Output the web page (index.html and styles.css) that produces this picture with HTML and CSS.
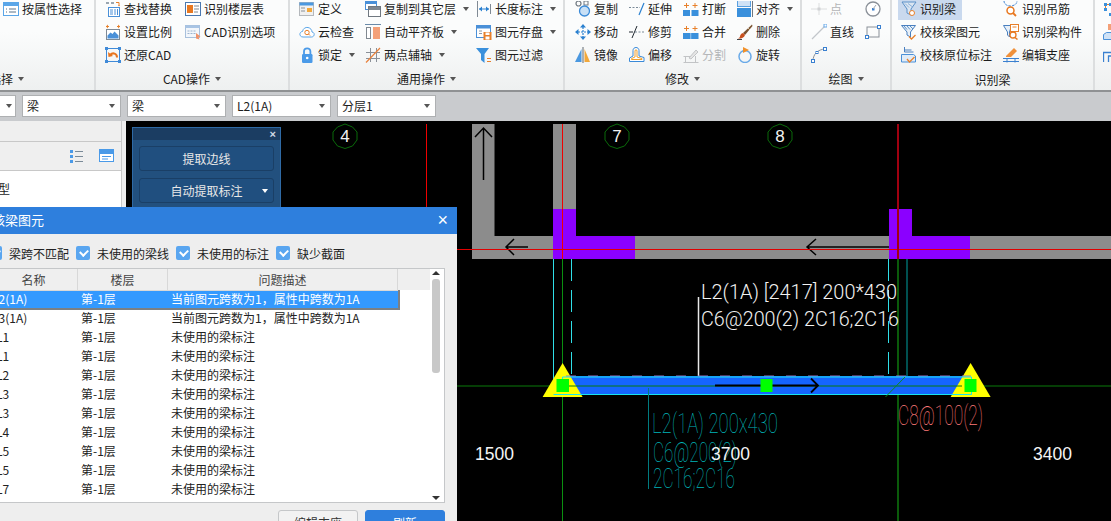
FILE: index.html
```html
<!DOCTYPE html>
<html lang="zh-CN">
<head>
<meta charset="utf-8">
<title>校核梁图元</title>
<link rel="stylesheet" href="styles.css">
</head>
<body>
<div class="page">
  <header class="ribbon">
    <section class="group g1">
      <div class="rows">
        <div class="item"><svg class="ic" viewBox="0 0 16 16"><rect x=".5" y="1.500" width="15" height="13" fill="#fff" stroke="#5aa6e8"/><rect x=".5" y="1.500" width="15" height="3.500" fill="#5aa6e8"/><path d="M3 8h1M6 8h7M3 11h1M6 11h7" stroke="#5a7288"/></svg><span>按属性选择</span></div>
      </div>
      <div class="label first"><span>选择</span><i class="caret"></i></div>
    </section>
    <section class="group g2">
      <div class="rows">
        <div class="item"><svg class="ic" viewBox="0 0 16 16"><path d="M1 1h3v2H1zM6 1h3v2H6z" fill="#9aa6b0"/><path d="M11 1.500h3v3" fill="none" stroke="#e8802a"/><path d="M13 4l1 1.500 1-1.500z" fill="#e8802a"/><rect x="3.500" y="6.500" width="11" height="9" fill="#fff" stroke="#4a90d8"/><path d="M5 9h3M5 11h3M5 13h3M10 8v6M12.500 8v6" stroke="#4a90d8"/></svg><span>查找替换</span></div>
        <div class="item"><svg class="ic" viewBox="0 0 16 16"><rect x=".5" y="1.500" width="15" height="13" fill="#fff" stroke="#4a78b0"/><rect x="2" y="4" width="6" height="8" fill="#e87820"/><path d="M9 5h5M9 8h5M9 11h4" stroke="#808890"/></svg><span>识别楼层表</span></div>
        <div class="item"><svg class="ic" viewBox="0 0 16 16"><path d="M1 2.500h3M12 2.500h3" stroke="#e8802a"/><path d="M3 .5v4L1 2.500zM13 .5v4l2-2z" fill="#e8802a"/><rect x="1.500" y="5.500" width="13" height="10" fill="#fff" stroke="#7e8a96"/><path d="M2.500 14.500v-3l3-3 2 1.500 2-2.500 4 4v3z" fill="#4a90d8"/></svg><span>设置比例</span></div>
        <div class="item"><svg class="ic" viewBox="0 0 16 16"><rect x=".5" y="1.500" width="14" height="12" fill="#f2f6fb" stroke="#a8c0dc"/><rect x=".5" y="1.500" width="14" height="2.500" fill="#a8c4e4"/><path d="M2.500 7h9M2.500 9.500h9" stroke="#9db4cf" stroke-dasharray="2 1"/><path d="M11 9l4.500 3.500-2 .5 1 2.500-3.500-1z" fill="#f0926a"/></svg><span>CAD识别选项</span></div>
        <div class="item"><svg class="ic" viewBox="0 0 16 16"><rect x="1.500" y="1.500" width="13" height="13" fill="none" stroke="#3f8ad8"/><path d="M0 0h3v3H0zM13 0h3v3h-3zM0 13h3v3H0zM13 13h3v3h-3z" fill="#3f8ad8"/><path d="M12 10.500C12 6.500 8 5 5 8" fill="none" stroke="#e8741e" stroke-width="2"/><path d="M3 5l.5 5 4.500-1z" fill="#e8741e"/></svg><span>还原CAD</span></div>
      </div>
      <div class="label"><span>CAD操作</span><i class="caret"></i></div>
    </section>
    <section class="group g3">
      <div class="rows">
        <div class="item"><svg class="ic" viewBox="0 0 16 16"><rect x=".5" y="1.500" width="14" height="13" fill="#f0f0f0" stroke="#b4b8bc"/><rect x=".5" y="1.500" width="14" height="3" fill="#4a98e0"/><path d="M2 7h4M2 10h4" stroke="#8a9096"/><rect x="8" y="7" width="5" height="4" fill="#f2a83a"/></svg><span>定义</span></div>
        <div class="item"><svg class="ic" viewBox="0 0 16 16"><rect x=".5" y="-2.500" width="11" height="11" fill="#fff" stroke="#4a90d8"/><rect x="1" y="-2" width="10" height="5" fill="#4a90d8"/><rect x="3.500" y="5.500" width="12" height="10" fill="#fff" stroke="#707880"/><rect x="4" y="6" width="11" height="3" fill="#808890"/></svg><span>复制到其它层</span><i class="caret"></i></div>
        <div class="item"><svg class="ic" viewBox="0 0 16 16"><path d="M1.500 0v16M14.500 3v10" stroke="#808a94"/><path d="M3 8h10" stroke="#2a80d0"/><path d="M6 5.500v5L3 8zM10 5.500v5l3-2.500z" fill="#2a80d0"/></svg><span>长度标注</span><i class="caret"></i></div>
        <div class="item"><svg class="ic" viewBox="0 0 16 16"><path d="M4 13C1.500 13 .5 11 1 9.500c.5-1.500 1.500-2 2.500-2C4 4.500 6.500 3 9 3.500s4 2.500 4 4.500c2 .3 2.500 2 2 3.300-.4 1.200-1.500 1.700-2.500 1.700z" fill="#fff" stroke="#5aa6e8"/><circle cx="8" cy="8.500" r="2.200" fill="none" stroke="#e8802a"/><path d="M9.500 10l1.500 1.500" stroke="#e8802a"/></svg><span>云检查</span></div>
        <div class="item"><svg class="ic" viewBox="0 0 16 16"><path d="M0 .5h16" stroke="#6a8aa8"/><rect x="1.500" y="3.500" width="4" height="11" fill="#fff" stroke="#808890"/><rect x="8" y="3" width="7" height="12" fill="#f4a078"/></svg><span>自动平齐板</span><i class="caret"></i></div>
        <div class="item"><svg class="ic" viewBox="0 0 16 16"><rect x=".5" y="1.500" width="14" height="12" fill="#fff" stroke="#4a90d8"/><rect x="1" y="2" width="13" height="2.500" fill="#4a90d8"/><path d="M3 7h3M3 9.500h3" stroke="#8a98a6"/><rect x="7.500" y="8" width="8" height="8" fill="#e8802a"/><rect x="9.500" y="8.500" width="4" height="2.500" fill="#fff"/><rect x="9.500" y="12.500" width="4" height="3" fill="#fff"/></svg><span>图元存盘</span><i class="caret"></i></div>
        <div class="item lock"><svg class="ic" viewBox="0 0 16 16"><path d="M5 8V4.500a3.200 3.200 0 0 1 6.400 0V8" fill="none" stroke="#4a9ae8" stroke-width="1.800"/><rect x="3" y="7" width="10.500" height="9" rx="1.200" fill="#4a9ae8"/><circle cx="8.200" cy="11" r="1.300" fill="#fff"/></svg><span>锁定</span><i class="caret"></i></div>
        <div class="item"><svg class="ic" viewBox="0 0 16 16"><path d="M5.500 1v14M11.500 1v14M1 5.500h14M1 11.500h14" stroke="#8a9098"/><path d="M1 15.500L15 1" stroke="#e8803a" stroke-width="1.200"/></svg><span>两点辅轴</span><i class="caret"></i></div>
        <div class="item"><svg class="ic" viewBox="0 0 16 16"><path d="M0 1h13L8.500 7v9L5 13V7z" fill="#3a90dc"/><path d="M11 11.500h4M11 14.500h4" stroke="#e8802a"/></svg><span>图元过滤</span></div>
      </div>
      <div class="label"><span>通用操作</span><i class="caret"></i></div>
    </section>
    <section class="group g4">
      <div class="rows">
        <div class="item"><svg class="ic" viewBox="0 0 16 16"><circle cx="3.500" cy="2.500" r="2.500" fill="none" stroke="#707880" stroke-width="1.200"/><rect x="9" y="0" width="4" height="4" fill="none" stroke="#707880"/><circle cx="9.500" cy="10" r="5" fill="#c8e0f6" stroke="#3a8ad8" stroke-width="1.300"/></svg><span>复制</span></div>
        <div class="item"><svg class="ic" viewBox="0 0 16 16"><path d="M0 6.500h11" stroke="#7a8a98" stroke-dasharray="2 1.500"/><path d="M10 14L15 2" stroke="#2a80d0" stroke-width="1.200"/></svg><span>延伸</span></div>
        <div class="item"><svg class="ic" viewBox="0 0 16 16"><rect x="0" y="9" width="7" height="6" fill="#3a90dc"/><rect x="8.500" y="9" width="7" height="6" fill="#3a90dc"/><path d="M3.500 2v5M1 4.500h5M12 2v5M9.500 4.500h5" stroke="#e8802a"/></svg><span>打断</span></div>
        <div class="item"><svg class="ic" viewBox="0 0 16 16"><rect x=".5" y="-3.500" width="13" height="9" fill="#cfe2f6" stroke="#5aa0e0"/><rect x="0" y="7" width="14" height="9" fill="#3a90dc"/><path d="M15.500 0v16" stroke="#707880"/></svg><span>对齐</span><i class="caret"></i></div>
        <div class="item"><svg class="ic" viewBox="0 0 16 16"><path d="M8 3v10M3 8h10" stroke="#2a80d0" stroke-width="1.200" stroke-dasharray="2 1"/><path d="M8 0l3 3.500H5zM8 16l3-3.500H5zM0 8l3.500-3v6zM16 8l-3.500-3v6z" fill="#2a80d0"/></svg><span>移动</span></div>
        <div class="item"><svg class="ic" viewBox="0 0 16 16"><path d="M6 8h10" stroke="#7a8a98" stroke-dasharray="2 1.500"/><path d="M0 8h4" stroke="#202830"/><path d="M3 14L8 2" stroke="#202830"/></svg><span>修剪</span></div>
        <div class="item"><svg class="ic" viewBox="0 0 16 16"><rect x="0" y="9" width="15.500" height="6" fill="#3a90dc"/><path d="M7.750 9v6" stroke="#9cc8f0"/><path d="M3.500 2v5M1 4.500h5M12 2v5M9.500 4.500h5" stroke="#e8802a"/></svg><span>合并</span></div>
        <div class="item"><svg class="ic" viewBox="0 0 16 16"><path d="M15 .5L6 9l2 2 7.500-9z" fill="#7a5230"/><path d="M11 4l2 2" stroke="#d8c8a8"/><path d="M6 9c-2 .5-3 2-3 3.500-.3 1-1 1.500-2 2 2.500.5 6-.5 7-3.500z" fill="#c8501e"/><path d="M0 15.500h5" stroke="#404448"/></svg><span>删除</span></div>
        <div class="item"><svg class="ic" viewBox="0 0 16 16"><path d="M6.500 2v13H0z" fill="#4a98e0"/><path d="M9.500 2v13H15z" fill="#f2a83a"/><path d="M8 0v16" stroke="#606870"/></svg><span>镜像</span></div>
        <div class="item"><svg class="ic" viewBox="0 0 16 16"><path d="M.5 14.500v-3.500l3.500-2V3.500c0-2 1.500-3 3-3s3 1 3 3V9l5 1.500v4z" fill="#fff" stroke="#3a8ad8"/><path d="M2.500 12.500v-1L6 10V4c0-.8.5-1.300 1-1.300s1 .5 1 1.300v6l5 1.500v1z" fill="none" stroke="#f0a030"/></svg><span>偏移</span></div>
        <div class="item off"><svg class="ic" viewBox="0 0 16 16"><path d="M.5 15.500h15M2.500 9v6.500M12.500 9v6.500M.5 9.500h10" stroke="#c2c4c6"/><path d="M6 11l7-8 2 2-7 7z" fill="#e4e4e4" stroke="#c2c4c6"/></svg><span>分割</span></div>
        <div class="item"><svg class="ic" viewBox="0 0 16 16"><circle cx="8" cy="9.500" r="6" fill="none" stroke="#6aaae8" stroke-width="1.500"/><path d="M6 0l6 3-6 3z" fill="#f0902a"/></svg><span>旋转</span></div>
      </div>
      <div class="label"><span>修改</span><i class="caret"></i></div>
    </section>
    <section class="group g5">
      <div class="rows">
        <div class="item off"><svg class="ic" viewBox="0 0 16 16"><path d="M0 8h16M8 2v12" stroke="#dcdedf"/><rect x="6.500" y="6.500" width="3" height="3" fill="#d0d2d4"/></svg><span>点</span></div>
        <div class="item"><svg class="ic" viewBox="0 0 16 16"><circle cx="8" cy="8" r="7" fill="#fff" stroke="#8a9098" stroke-width="1.300"/><rect x="7" y="7" width="2.500" height="2.500" fill="#3a80d0"/><path d="M8 8l3-4" stroke="#a0a8b0"/></svg></div>
        <div class="item"><svg class="ic" viewBox="0 0 16 16"><path d="M1 15L15 1" stroke="#c2c6ca" stroke-width="1.200"/><rect x="13" y="0" width="3" height="3" fill="#fff" stroke="#6aaae8"/></svg><span>直线</span></div>
        <div class="item"><svg class="ic" viewBox="0 0 16 16"><rect x="2" y="3" width="12" height="10" fill="none" stroke="#8a9098"/><rect x="12.500" y="1.500" width="3" height="3" fill="#fff" stroke="#3a80d0"/><rect x=".5" y="11.500" width="3" height="3" fill="#fff" stroke="#3a80d0"/></svg></div>
        <div class="item"><svg class="ic" viewBox="0 0 16 16"><path d="M2 14C2 7 7 2.500 14 2" fill="none" stroke="#8a9098"/><rect x="12.500" y=".5" width="3" height="3" fill="#fff" stroke="#3a80d0"/><rect x=".5" y="12.500" width="3" height="3" fill="#fff" stroke="#3a80d0"/><rect x="5" y="4.500" width="2" height="2" fill="#fff" stroke="#3a80d0"/></svg></div>
      </div>
      <div class="label"><span>绘图</span><i class="caret"></i></div>
    </section>
    <section class="group g6">
      <div class="rows">
        <div class="item active"><svg class="ic" viewBox="0 0 16 16"><path d="M1 1h14L10 8v6L6 12V8z" fill="#dbe6f2" stroke="#5a90c8"/><path d="M4 2.500l4 4M7 2.500l4 3" stroke="#8ab0d8"/><circle cx="11" cy="12" r="2.500" fill="#fff" stroke="#e8802a"/></svg><span>识别梁</span></div>
        <div class="item"><svg class="ic" viewBox="0 0 16 16"><path d="M1 0c0 3 3 5 6.500 5S14 3 14 0" fill="none" stroke="#3a80d0" stroke-dasharray="2.500 1"/><circle cx="7.500" cy="9.500" r="3.500" fill="#fff" stroke="#e87820" stroke-width="1.500"/><path d="M10 12l3 3" stroke="#e87820" stroke-width="1.800"/></svg><span>识别吊筋</span></div>
        <div class="item"><svg class="ic" viewBox="0 0 16 16"><path d="M.5 1.500h14L9.500 8v5L6 11V8z" fill="#e8f0f8" stroke="#4a80c0"/><path d="M3 2l3 3.500M6 2l3 3.500M9 2l3 3" stroke="#5a90c8"/><path d="M8 12.500l2.500 2.500 4-4" fill="none" stroke="#e8802a" stroke-width="1.300"/></svg><span>校核梁图元</span></div>
        <div class="item"><svg class="ic" viewBox="0 0 16 16"><path d="M.5 1.500h8L6.500 8v5L4.500 11V8z" fill="#e8f0f8" stroke="#4a80c0"/><rect x="7.500" y=".5" width="8" height="7" fill="#fff" stroke="#e8802a"/><path d="M9.500 3h4" stroke="#e8802a"/><circle cx="10" cy="11" r="3" fill="#fff" stroke="#e87820" stroke-width="1.300"/><path d="M12 13.500l2.500 2" stroke="#e87820" stroke-width="1.500"/></svg><span>识别梁构件</span></div>
        <div class="item"><svg class="ic" viewBox="0 0 16 16"><path d="M3.500 0v5h9M3.500 3h7" fill="none" stroke="#4a80c0"/><path d="M.5 7.500h12l2 1.500v6H.5z" fill="#e0ecf8" stroke="#4a90d8"/><path d="M6 12l2.500 3 5-5" fill="none" stroke="#e8802a" stroke-width="1.300"/></svg><span>校核原位标注</span></div>
        <div class="item"><svg class="ic" viewBox="0 0 16 16"><path d="M3 9l8-8 3 3-6 6H3z" fill="#f0903a"/><path d="M0 11.500h16M0 14.500h16M4 11.500v4M12 11.500v4" stroke="#3a80d0"/></svg><span>编辑支座</span></div>
      </div>
      <div class="label tall"><span>识别梁</span></div>
    </section>
    <section class="group g7">
      <div class="rows single">
        <div class="item"><svg class="ic" viewBox="0 0 16 16"><path d="M1 2h3v3H1zM6 2h3v3H6zM1 7h3v3H1zM6 12h3v3H6z" fill="#3a90dc"/><path d="M4 3.500h2M2.500 5v2" stroke="#e8802a"/></svg></div>
        <div class="item"><svg class="ic" viewBox="0 0 16 16"><path d="M5 0h4v6H5z" fill="#f4a078"/><path d="M.5 15.500v-5l3-2h12v7z" fill="#cfe2f6" stroke="#4a90d8"/></svg></div>
        <div class="item"><svg class="ic" viewBox="0 0 16 16"><path d="M.5 15V5.500h13V15M5.500 15V9h4v6" fill="none" stroke="#3a80d0" stroke-width="1.300"/></svg></div>
      </div>
    </section>
  </header>

  <div class="toolbar">
    <div class="select tiny"><i class="caret"></i></div>
    <div class="select"><span>梁</span><i class="caret"></i></div>
    <div class="select"><span>梁</span><i class="caret"></i></div>
    <div class="select"><span>L2(1A)</span><i class="caret"></i></div>
    <div class="select"><span>分层1</span><i class="caret"></i></div>
  </div>

  <main class="main">
    <aside class="side">
      <div class="side-inner">
        <div class="band"></div>
        <div class="band tools">
          <svg class="side-ic" viewBox="0 0 13 14"><path d="M0 1h3v3H0zM0 6h3v3H0zM0 11h3v3H0z" fill="#4a9ae8"/><path d="M5 2.500h8M5 7.500h8M5 12.500h8" stroke="#7a8a98"/></svg>
          <svg class="side-ic wide" viewBox="0 0 15 14"><rect x=".5" y=".5" width="14" height="12" fill="#fff" stroke="#4a9ae8"/><rect x="1" y="1" width="13" height="4" fill="#4a9ae8"/><path d="M3 7.500h9M3 10h6" stroke="#4a9ae8"/></svg>
        </div>
        <div class="side-list"><span>类型</span></div>
      </div>
    </aside>
    <div class="canvas">
      <svg class="cad" viewBox="126 121 985 400">
        <g fill="#8c8c8c">
          <rect x="472" y="124" width="22.500" height="135"/>
          <rect x="472" y="236" width="639" height="23"/>
          <rect x="553" y="124" width="23" height="90"/>
        </g>
        <g fill="#8b00ff">
          <rect x="553" y="209" width="23" height="50"/>
          <rect x="576" y="236" width="59" height="23"/>
          <rect x="889" y="209" width="23" height="50"/>
          <rect x="912" y="236" width="58" height="23"/>
        </g>
        <g fill="none" stroke="#000" stroke-width="1.500">
          <path d="M483.500 128v52M475 137l8.500-9 8.500 9"/>
          <path d="M506 247h22M514 239l-8 8 8 8"/>
          <path d="M807 247h82M816 239l-9 8 9 8"/>
        </g>
        <g fill="none" stroke="#0a6a0a">
          <path d="M345 124l7.500 3 4.500 5v8l-4.500 6-7.500 2.500-7.500-2.500-4.500-6v-8l4.500-5z"/>
          <path d="M617 124l7.500 3 4.500 5v8l-4.500 6-7.500 2.500-7.500-2.500-4.500-6v-8l4.500-5z"/>
          <path d="M780 124l7.500 3 4.500 5v8l-4.500 6-7.500 2.500-7.500-2.500-4.500-6v-8l4.500-5z"/>
        </g>
        <text class="axis" x="345" y="142">4</text>
        <text class="axis" x="617" y="142">7</text>
        <text class="axis" x="780" y="142">8</text>
        <path d="M426.500 124v85M562.500 124v135" stroke="#f00000" stroke-width="1"/>
        <path d="M457 249.500h654" stroke="#e00000" stroke-width="1"/>
        <path d="M898 124v135" stroke="#a00010" stroke-width="2"/>
        <path d="M562.500 259v262" stroke="#0a9010" stroke-width="1"/>
        <path d="M898 259v262" stroke="#0a5a0a" stroke-width="2"/>
        <path d="M457 386h654" stroke="#0a7a0a" stroke-width="1"/>
        <path d="M553.500 259v136" stroke="#30dfe8" stroke-width="1"/>
        <path d="M571.500 259v117M888.500 259v117" stroke="#30dfe8" stroke-width="1" stroke-dasharray="22 9"/>
        <path d="M907 259v117" stroke="#00a0a0" stroke-width="1"/>
        <path d="M698.500 297v79" stroke="#e8e8e8" stroke-width="1.500"/>
        <text class="lead" x="701" y="299" textLength="196" lengthAdjust="spacingAndGlyphs">L2(1A) [2417] 200*430</text>
        <text class="lead" x="701" y="326" textLength="198" lengthAdjust="spacingAndGlyphs">C6@200(2) 2C16;2C16</text>
        <rect x="562" y="376" width="409" height="19" fill="#1565ff"/>
        <path d="M562.600 363l20 34h-40z" fill="#ffff00"/>
        <path d="M970.600 363l20 34h-40z" fill="#ffff00"/>
        <path d="M566 376h405" stroke="#9a70c8" stroke-width="1" stroke-dasharray="10 12"/>
        <path d="M553.500 394.500h418v-17.500h-409v11" fill="none" stroke="#18e4f0" stroke-width="1"/>
        <path d="M562 386h400" stroke="#0a7a0a" stroke-width="1"/>
        <path d="M885.500 397l19.500-20" stroke="#0a8a20" stroke-width="1"/>
        <path d="M715 385.500h102M811 378.500l7 7-7 7" fill="none" stroke="#000" stroke-width="1.800"/>
        <g fill="#00ff00">
          <rect x="556.500" y="379" width="12.500" height="13"/>
          <rect x="760.500" y="379" width="12" height="13"/>
          <rect x="964.500" y="379" width="12" height="13"/>
        </g>
        <path d="M648.500 388v101" stroke="#007b80" stroke-width="1"/>
        <text class="vec teal" x="652" y="433" textLength="126" lengthAdjust="spacingAndGlyphs">L2(1A) 200x430</text>
        <text class="vec teal" x="653" y="462" textLength="84" lengthAdjust="spacingAndGlyphs">C6@200(2)</text>
        <text class="vec teal" x="653" y="488" textLength="82" lengthAdjust="spacingAndGlyphs">2C16;2C16</text>
        <text class="vec rose" x="898" y="425" textLength="85" lengthAdjust="spacingAndGlyphs">C8@100(2)</text>
        <text class="dim" x="475" y="460" textLength="39">1500</text>
        <text class="dim" x="711" y="460" textLength="39">3700</text>
        <text class="dim" x="1033" y="460" textLength="39">3400</text>
      </svg>
      <div class="float">
        <div class="float-head"><span class="float-x">×</span></div>
        <div class="float-body">
          <div class="float-btn">提取边线</div>
          <div class="float-btn drop">自动提取标注<i class="caret white"></i></div>
        </div>
      </div>
    </div>
  </main>

  <div class="dialog">
    <div class="dialog-head"><span>校核梁图元</span><span class="dialog-x">×</span></div>
    <div class="checks">
      <label class="check"><i class="box"></i>梁跨不匹配</label>
      <label class="check"><i class="box"></i>未使用的梁线</label>
      <label class="check"><i class="box"></i>未使用的标注</label>
      <label class="check"><i class="box"></i>缺少截面</label>
    </div>
    <div class="table">
      <div class="thead">
        <div class="th">名称</div><div class="th">楼层</div><div class="th">问题描述</div>
      </div>
      <div class="tbody">
        <div class="tr long selected"><div>L2(1A)</div><div>第-1层</div><div>当前图元跨数为1，属性中跨数为1A</div></div>
        <div class="tr long"><div>L3(1A)</div><div>第-1层</div><div>当前图元跨数为1，属性中跨数为1A</div></div>
        <div class="tr"><div>L1</div><div>第-1层</div><div>未使用的梁标注</div></div>
        <div class="tr"><div>L1</div><div>第-1层</div><div>未使用的梁标注</div></div>
        <div class="tr"><div>L2</div><div>第-1层</div><div>未使用的梁标注</div></div>
        <div class="tr"><div>L3</div><div>第-1层</div><div>未使用的梁标注</div></div>
        <div class="tr"><div>L3</div><div>第-1层</div><div>未使用的梁标注</div></div>
        <div class="tr"><div>L4</div><div>第-1层</div><div>未使用的梁标注</div></div>
        <div class="tr"><div>L5</div><div>第-1层</div><div>未使用的梁标注</div></div>
        <div class="tr"><div>L5</div><div>第-1层</div><div>未使用的梁标注</div></div>
        <div class="tr"><div>L7</div><div>第-1层</div><div>未使用的梁标注</div></div>
      </div>
      <div class="scroll"><i class="up"></i><b class="thumb"></b><i class="down"></i></div>
    </div>
    <div class="actions">
      <div class="btn">编辑支座</div>
      <div class="btn primary">刷新</div>
    </div>
  </div>
</div>
</body>
</html>
```
FILE: styles.css
```css
* { box-sizing: border-box; }
html, body { margin: 0; padding: 0; background: #000; }
.page {
  position: relative;
  width: 1111px;
  height: 521px;
  overflow: hidden;
  font-family: "Noto Sans CJK SC", "Noto Sans", sans-serif;
  font-size: 12px;
  color: #1c1c1c;
  display: flex;
  flex-direction: column;
}
i { display: block; }

/* Ribbon */
.ribbon {
  height: 92px;
  flex: none;
  display: flex;
  background: linear-gradient(#fbfcfc, #fbfcfc 35%, #eef0f0);
  border-bottom: 2px solid #8f9193;
}
.group {
  --pad: 0px;
  flex: none;
  display: flex;
  flex-direction: column;
  padding-left: var(--pad);
  border-right: 2px solid #dcdedf;
}
.rows {
  margin-top: -3px;
  height: 69px;
  display: grid;
  grid-auto-rows: 23px;
}
.item {
  display: flex;
  align-items: center;
  gap: 3px;
  height: 23px;
  white-space: nowrap;
  line-height: 23px;
}
.ic { width: 16px; height: 16px; flex: none; overflow: hidden; }
.off { color: #b4b6b8; }
.caret {
  width: 0;
  height: 0;
  border: 3.500px solid transparent;
  border-top-color: #555;
  border-top-width: 4px;
  border-bottom-width: 0;
  margin-left: 4px;
  flex: none;
}
.label {
  height: 18px;
  margin: 4px 0 0 calc(var(--pad) * -1);
  display: flex;
  justify-content: center;
  align-items: center;
  gap: 1px;
  line-height: 18px;
}
.label.first { justify-content: flex-start; margin-left: -14px; }
.label.tall { margin-top: 5px; }

.g1 { width: 96px; --pad: 3px; }
.g2 { width: 194px; --pad: 9px; }
.g2 .rows { grid-template-columns: 80px 1fr; }
.g3 { width: 275px; --pad: 9px; }
.g3 .rows { grid-template-columns: 66px 111px 1fr; }
.g4 { width: 237px; --pad: 10px; }
.g4 .rows { grid-template-columns: 54px 54px 54px 1fr; }
.g5 { width: 90px; --pad: 9px; }
.g5 .rows { grid-template-columns: 54px 1fr; }
.g6 { width: 203px; --pad: 6px; }
.g6 .rows { grid-template-columns: 102px 1fr; }
.g6 .item { padding-left: 3px; }
.g6 .item.active { background: #c9d9ee; width: 64px; }
.g7 { flex: 1; --pad: 8px; border-right: 0; }

/* Selects */
.toolbar {
  height: 29px;
  flex: none;
  display: flex;
  align-items: center;
  gap: 6px;
  background: #c9cbce;
  padding-bottom: 1px;
}
.select {
  width: 99px;
  height: 22px;
  display: flex;
  align-items: center;
  justify-content: space-between;
  padding: 0 5px 0 4px;
  background: #fff;
  border: 1px solid #aeb0b2;
  line-height: 20px;
}
.select.tiny { width: 16px; border-left: 0; justify-content: flex-end; padding-right: 3px; }

/* Main */
.main { flex: 1; display: flex; min-height: 0; }
.side {
  width: 126px;
  flex: none;
  background: #eeeeee;
  padding-right: 4px;
}
.side-inner {
  height: 100%;
  border-right: 1px solid #c8c8c8;
  display: flex;
  flex-direction: column;
}
.band {
  height: 21px;
  background: #efefef;
  border-bottom: 1px solid #c8c8c8;
  flex: none;
}
.band.tools {
  height: 29px;
  display: flex;
  align-items: center;
  padding-left: 70px;
  gap: 16px;
}
.side-ic { width: 13px; height: 14px; flex: none; }
.side-ic.wide { width: 15px; }
.side-list {
  flex: 1;
  background: #fff;
  padding: 9px 0 0;
  margin-left: -14px;
  line-height: 18px;
}

.canvas { flex: 1; position: relative; background: #000; }
.cad { position: absolute; left: 0; top: 0; width: 985px; height: 400px; }
.cad text { font-family: "Liberation Sans", sans-serif; }
.axis { fill: #f2f2f2; font-size: 17px; text-anchor: middle; }
.cad .lead { fill: #f2f2f2; font-size: 21px; font-family: Roboto, "Liberation Sans", sans-serif; font-weight: 300; }
.dim { fill: #f5f5f5; font-size: 17.500px; }
.cad .vec { font-size: 28px; font-family: Roboto, "Liberation Sans", sans-serif; font-weight: 100; }
.teal { fill: #00b4b8; }
.cad .rose { fill: #ff7a7a; font-size: 27px; }

/* Floating panel */
.float {
  position: absolute;
  left: 6px;
  top: 6px;
  width: 149px;
  height: 90px;
  background: #22507e;
  border: 1px solid #2f6aa5;
  color: #e8e8e8;
}
.float-head {
  height: 12px;
  background: #1b3d62;
  display: flex;
  justify-content: flex-end;
  align-items: center;
  padding-right: 4px;
}
.float-x { font-size: 11px; line-height: 12px; color: #d0dae6; font-family: "Liberation Sans", sans-serif; font-weight: 700; }
.float-body { padding: 6px 6px 0; display: flex; flex-direction: column; gap: 7px; }
.float-btn {
  position: relative;
  height: 25px;
  line-height: 24px;
  text-align: center;
  background: #204f7f;
  border: 1px solid #1a3f66;
  border-radius: 3px;
}
.caret.white { position: absolute; right: 5px; top: 10px; border-top-color: #fff; margin: 0; }

/* Dialog */
.dialog {
  position: absolute;
  left: -60px;
  top: 207px;
  width: 517px;
  height: 340px;
  background: #eeeeee;
  display: flex;
  flex-direction: column;
}
.dialog-head {
  height: 27px;
  flex: none;
  background: #2e7fdd;
  color: #fff;
  font-size: 13px;
  line-height: 26px;
  padding: 0 9px 0 39px;
  display: flex;
  justify-content: space-between;
}
.dialog-x { font-family: "Liberation Sans", sans-serif; font-size: 18px; line-height: 26px; }
.checks {
  height: 34px;
  flex: none;
  padding: 4px 0 0 48px;
  display: flex;
  align-items: center;
  gap: 7px;
  color: #222;
}
.check { display: flex; align-items: center; gap: 7px; white-space: nowrap; }
.box {
  position: relative;
  width: 14px;
  height: 14px;
  flex: none;
  background: #5aa6f0;
  border-radius: 2px;
}
.box::after {
  content: "";
  position: absolute;
  left: 3.500px;
  top: 2.500px;
  width: 6px;
  height: 4px;
  border-left: 2px solid #fff;
  border-bottom: 2px solid #fff;
  transform: rotate(-45deg);
}
.table {
  position: relative;
  margin-left: 49px;
  width: 456px;
  height: 235px;
  flex: none;
  background: #fff;
  border: 1px solid #c5c7c9;
  padding-right: 14px;
}
.thead {
  display: grid;
  grid-template-columns: 88px 90px 230px 1fr;
  height: 21px;
  background: #efefef;
}
.th {
  text-align: center;
  line-height: 21px;
  color: #444;
  border-right: 1px solid #d8d8d8;
  border-bottom: 1px solid #d8d8d8;
}
.tr {
  display: grid;
  grid-template-columns: 88px 90px 230px;
  height: 19px;
  line-height: 18px;
  white-space: nowrap;
  color: #222;
}
.tr > div { padding-left: 3px; }
.tr > div:first-child { padding-left: 6px; }
.tr.long > div:first-child { padding-left: 2px; }
.tr.selected {
  width: 410px;
  background: #3399ff;
  color: #fff;
  border-right: 2px solid #7c8084;
  border-bottom: 2px solid #7c8084;
  height: 20px;
  margin-bottom: -1px;
}
.scroll {
  position: absolute;
  right: 0;
  top: 0;
  bottom: 0;
  width: 14px;
}
.thumb {
  position: absolute;
  left: 2px;
  top: 10px;
  width: 8px;
  height: 94px;
  background: #c8c8c8;
  border-radius: 3px;
}
.up, .down {
  position: absolute;
  left: 2px;
  width: 0;
  height: 0;
  border: 4px solid transparent;
}
.up { top: 2px; border-top-width: 0; border-bottom-color: #333; }
.down { bottom: 2px; border-bottom-width: 0; border-top-color: #333; }
.actions {
  display: flex;
  justify-content: flex-end;
  gap: 7px;
  padding: 7px 12px 0 0;
}
.btn {
  width: 80px;
  height: 26px;
  text-align: center;
  line-height: 24px;
  background: #f2f2f2;
  border: 1px solid #c5c7c9;
  border-radius: 3px;
  color: #333;
}
.btn.primary { background: #2e7fdd; border-color: #2e7fdd; color: #fff; }
```
